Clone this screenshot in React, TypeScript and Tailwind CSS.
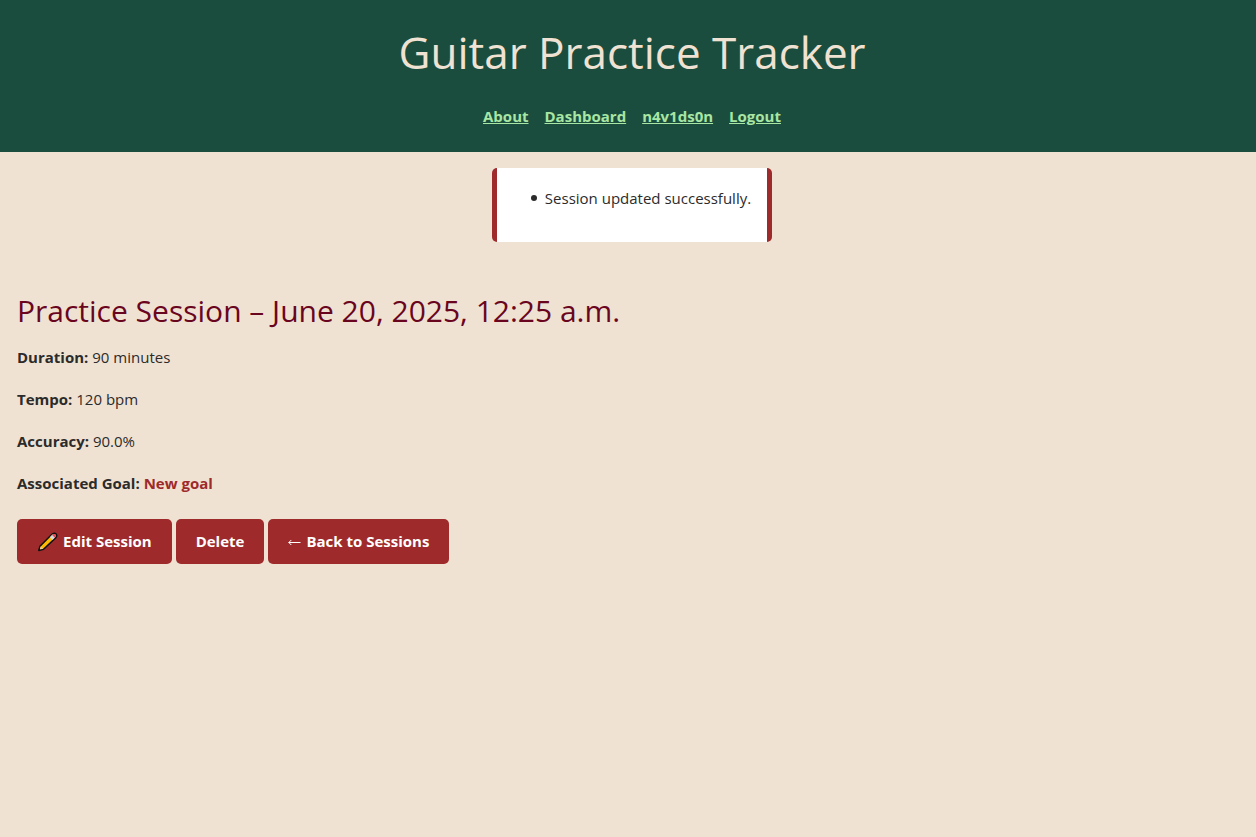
import type { ReactNode } from "react";

const navLinks = ["About", "Dashboard", "n4v1ds0n", "Logout"];

const buttonClass =
  "inline-flex h-[45px] items-center rounded-[5px] bg-[#9e2a2b] px-5 text-[15px] font-bold text-white";

function PencilIcon() {
  return (
    <svg width="21" height="20" viewBox="0 0 21 20" aria-hidden="true">
      <path
        d="M1.8 18.4 3 14.2 15.2 2Q17.4.4 19 1.9 20.5 3.5 18.9 5.6L6.5 17.2Z"
        fill="#ffb900"
        stroke="#111"
        strokeWidth="1.5"
        strokeLinejoin="round"
      />
      <path d="M2.7 17.5 3.7 14.4 6.3 16.8Z" fill="#ecc9a0" />
      <path d="M1.6 18.7 2.2 16.8 3.8 18.1Z" fill="#111" />
      <path d="M12.8 5.3 15.5 2.6 18.2 5.3 15.4 8Z" fill="#d3d7dc" />
      <path d="M15.1 3Q17.2 1.3 18.5 2.4 19.6 3.8 17.9 5.7Z" fill="#e74856" />
    </svg>
  );
}

function Detail({ label, children }: { label: string; children: ReactNode }) {
  return (
    <p className="mb-[18px] leading-6">
      <strong className="font-bold">{label}:</strong> {children}
    </p>
  );
}

export default function App() {
  return (
    <div className="min-h-screen bg-[#f0e2d2] font-['Open_Sans','Noto_Sans',sans-serif] text-[15px] text-[#2b2b2b]">
      <header className="flex flex-col items-center bg-[#1b4d3e] pt-4 pb-6 pl-2">
        <h1 className="text-[44px] leading-[72px] text-[#f0e2d2]">Guitar Practice Tracker</h1>
        <nav className="mt-4 flex gap-4 font-bold leading-6 text-[#a8e6a3]">
          {navLinks.map((name) => (
            <a key={name} href="#" className="underline">
              {name}
            </a>
          ))}
        </nav>
      </header>
      <div className="flex justify-center pt-4 pl-2">
        <ul className="rounded-[5px] border-x-[5px] border-[#9e2a2b] bg-white pt-[18px] pr-4 pb-8 pl-[34px] leading-6">
          <li className="flex items-center gap-2 before:size-1.5 before:rounded-full before:bg-current">
            Session updated successfully.
          </li>
        </ul>
      </div>
      <main className="px-[17px] pt-[45px]">
        <h2 className="mb-[10px] text-[30px] leading-12 text-[#6a0520]">
          Practice Session – June 20, 2025, 12:25 a.m.
        </h2>
        <Detail label="Duration">90 minutes</Detail>
        <Detail label="Tempo">120 bpm</Detail>
        <Detail label="Accuracy">90.0%</Detail>
        <Detail label="Associated Goal">
          <a href="#" className="font-bold text-[#9e2a2b]">
            New goal
          </a>
        </Detail>
        <div className="mt-6 flex flex-wrap gap-1">
          <a href="#" className={`${buttonClass} gap-[5px]`}>
            <PencilIcon />
            Edit Session
          </a>
          <button type="button" className={buttonClass}>
            Delete
          </button>
          <a href="#" className={`${buttonClass} gap-[5px]`}>
            <svg width="13" height="10" viewBox="0 0 13 10" fill="none" stroke="currentColor" aria-hidden="true">
              <path d="M.8 5.5H12.5M3.3 3 .8 5.5 3.3 8" />
            </svg>
            Back to Sessions
          </a>
        </div>
      </main>
    </div>
  );
}
